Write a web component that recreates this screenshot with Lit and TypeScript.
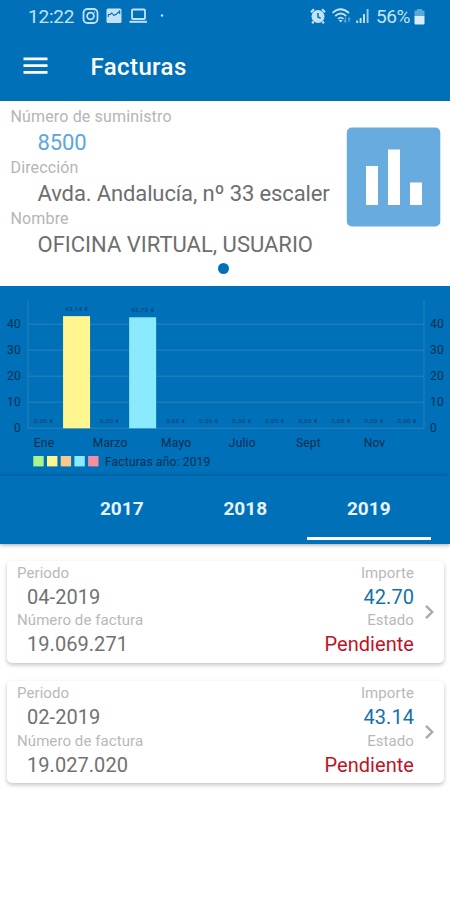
import { LitElement, html, svg, css } from "lit";
import { customElement, property } from "lit/decorators.js";

interface Invoice {
  period: string;
  number: string;
  amount: string;
  status: string;
}

const INVOICES: Invoice[] = [
  { period: "04-2019", number: "19.069.271", amount: "42.70", status: "Pendiente" },
  { period: "02-2019", number: "19.027.020", amount: "43.14", status: "Pendiente" },
];

@customElement("status-bar")
class StatusBar extends LitElement {
  static styles = css`
    :host { display: flex; align-items: center; height: 32px; padding: 0 25px 0 28px; color: #c3e2f7; font-size: 19px; }
    .time { width: 46px; letter-spacing: -0.2px; }
    .left { display: block; margin-left: 8px; }
    .right { display: block; margin-left: auto; }
    .pct { margin: 0 2px 0 4.5px; width: 36px; letter-spacing: -0.4px; }
    .battery { display: block; }
  `;
  render() {
    return html`
      <span class="time">12:22</span>
      <svg class="left" width="84" height="18" viewBox="0 0 84 18" fill="none" stroke="#c3e2f7" stroke-width="1.8">
        <rect x="1.5" y="2" width="14" height="14" rx="4" />
        <circle cx="8.5" cy="9" r="3.4" />
        <circle cx="12.4" cy="5.2" r="0.7" fill="#c3e2f7" stroke="none" />
        <rect x="24.5" y="1.5" width="15" height="14.5" rx="1.5" fill="#c3e2f7" stroke="none" />
        <path d="M26.3 10v-2.5h2l1.5-1.5 2.2 2.5 2.5-1.5L37.7 4v3" stroke="#0070b9" stroke-width="1.1" />
        <rect x="50" y="2.5" width="13" height="9.5" rx="1" />
        <path d="M47.5 14.8h17.5" stroke-width="2" />
        <circle cx="80" cy="8.5" r="1.2" fill="#c3e2f7" stroke="none" />
      </svg>
      <svg class="right" width="62" height="18" viewBox="0 0 62 18" fill="none" stroke="#c3e2f7">
        <circle cx="8" cy="9.5" r="6.5" fill="#c3e2f7" stroke="none" />
        <path d="M1 5.2 4 2.3M15 5.2 12 2.3M3.5 14.5 2.2 16.3M12.5 14.5l1.3 1.8" stroke-width="2.2" />
        <path d="M8 6v4l2.6 1.2" stroke="#0070b9" stroke-width="1.5" />
        <path d="M22.5 6q8-7.5 16.5 0M25.2 9q5.5-5 11 0M28 11.8q2.7-2.5 5.5 0" stroke-width="1.7" />
        <path d="M28.7 13l2 2.5 2-2.5z" fill="#c3e2f7" stroke="none" />
        <path d="M35.5 10.5v4.5l-1.5-1.5M39 15v-4l1.3 1.3" stroke="#5ca8da" stroke-width="1.3" />
        <path d="M47.2 16v-2.5M50.6 16v-5M54 16V7" stroke-width="1.9" />
        <path d="M57.6 16V2" stroke-width="1.9" opacity="0.8" />
      </svg>
      <span class="pct">56%</span>
      <svg class="battery" width="11" height="17" viewBox="0 0 11 17">
        <path d="M3 1h5v1.5h2.5V8H.5V2.5H3z" fill="#5ca6d8" />
        <path d="M.5 8h10v7.5q0 1-1 1h-8q-1 0-1-1z" fill="#d8edfb" />
      </svg>
    `;
  }
}

@customElement("invoice-chart")
class InvoiceChart extends LitElement {
  static styles = css`
    :host { display: block; height: 189.5px; background: #0070b9; }
    .plot { display: block; }
    .axis { font-size: 12px; fill: #062f50; letter-spacing: 0.2px; }
    .value { font-size: 6px; fill: #0a3a61; letter-spacing: 0.1px; }
    .grid { stroke: #1b7db9; stroke-width: 1.4; fill: none; }
  `;
  render() {
    const values = [0, 43.14, 0, 42.7, 0, 0, 0, 0, 0, 0, 0, 0];
    const months = ["Ene", "Marzo", "Mayo", "Julio", "Sept", "Nov"];
    const legend = ["#a9f58c", "#fff68f", "#f9c88b", "#8ceaff", "#f88ca0"];
    const base = 142.3;
    const unit = 2.6;
    const step = 33.05;
    return html`
      <svg class="plot" width="450" height="189" viewBox="0 0 450 189">
        <path class="grid" d="M28 14V143M424 14V143" />
        ${[0, 10, 20, 30, 40].map((v) => {
          const y = base - v * unit;
          return svg`
            <path class="grid" d=${`M28 ${y}H424`} />
            <text class="axis" x="21" y=${y + 3.7} text-anchor="end">${v}</text>
            <text class="axis" x="430" y=${y + 3.7}>${v}</text>`;
        })}
        ${values.map((v, i) => {
          const cx = 43.5 + i * step;
          const h = v * unit;
          return svg`
            ${v ? svg`<rect x=${cx - 13.5} y=${base - h} width="27" height=${h} fill=${i === 1 ? "#fff68f" : "#8ceaff"} />` : null}
            <text class="value" x=${cx} y=${base - h - 5.5} text-anchor="middle"
              textLength=${v ? 23 : 19}>${v.toFixed(2).replace(".", ",")} €</text>`;
        })}
        ${months.map((m, i) => svg`<text class="axis" x=${44 + i * 66.1} y="160.5" text-anchor="middle">${m}</text>`)}
        ${legend.map((c, i) => svg`<rect x=${33.3 + i * 13.7} y="170" width="10.4" height="10.4" fill=${c} />`)}
        <text class="axis" x="105" y="179.5" textLength="105.5">Facturas año: 2019</text>
      </svg>
    `;
  }
}

@customElement("invoice-card")
class InvoiceCard extends LitElement {
  @property({ attribute: false }) invoice!: Invoice;
  static styles = css`
    :host {
      display: flex; height: 102px; box-sizing: border-box; padding: 3px 9px 0 10px;
      background: #fff; border-radius: 5px; box-shadow: 0 2px 4px rgba(0, 0, 0, 0.24);
    }
    .left { flex: 1; }
    .right { text-align: right; margin-right: 1.5px; }
    .label { font-size: 15px; line-height: 19px; color: #b8b8b8; letter-spacing: 0.08px; }
    .value { font-size: 20px; line-height: 28.5px; color: #717171; letter-spacing: 0.05px; }
    .left .value { padding-left: 10px; }
    .right .amount { color: #1371ad; }
    .right .status { color: #c01226; }
    .chevron { display: block; margin: 40px 0 0 9.5px; }
  `;
  render() {
    const v = this.invoice;
    return html`
      <div class="left">
        <div class="label">Periodo</div>
        <div class="value">${v.period}</div>
        <div class="label">Número de factura</div>
        <div class="value">${v.number}</div>
      </div>
      <div class="right">
        <div class="label">Importe</div>
        <div class="value amount">${v.amount}</div>
        <div class="label">Estado</div>
        <div class="value status">${v.status}</div>
      </div>
      <svg class="chevron" width="10" height="16" viewBox="0 0 10 16" fill="none" stroke="#a9a9a9" stroke-width="2.4">
        <path d="M1 1.8 7.2 8 1 14.2" />
      </svg>
    `;
  }
}

@customElement("app-root")
class AppRoot extends LitElement {
  static styles = css`
    :host {
      display: block; width: 450px; height: 900px; overflow: hidden; background: #fff;
      font-family: Roboto, "Noto Sans", sans-serif;
    }
    .top { height: 100.5px; background: #0070b9; }
    .bar { display: flex; align-items: center; height: 67px; padding-left: 23px; }
    .title { margin: 2px 0 0 42.5px; color: #fff; font-size: 24px; font-weight: 500; letter-spacing: 0.4px; }
    .supply { display: flex; justify-content: space-between; height: 156px; padding: 6px 9px 0 10.5px; }
    .label { font-size: 16px; line-height: 20px; color: #b5b5b5; letter-spacing: 0.15px; white-space: nowrap; }
    .value { padding-left: 27px; font-size: 22px; line-height: 31px; color: #6e6e6e; letter-spacing: -0.12px; white-space: nowrap; }
    .value.number { color: #5ba6dc; }
    .value.name { letter-spacing: 0; }
    .stats { display: block; margin-top: 20px; }
    .pager { display: flex; justify-content: center; height: 23px; }
    .dot { width: 11px; height: 11px; margin-right: 4px; border-radius: 50%; background: #0070b9; }
    .tabs {
      display: flex; height: 68.5px; padding-left: 60px; background: #0070b9;
      box-shadow: 0 1px 4px rgba(0, 0, 0, 0.35); border-top: 1px solid #0064a6; box-sizing: border-box;
    }
    .tab {
      box-sizing: border-box; width: 123.5px; height: 64px; border-bottom: 3px solid transparent;
      color: #e6f3fc; font-size: 19px; font-weight: 700; line-height: 65px; text-align: center;
    }
    .tab.active { border-color: #fff; }
    .list { display: flex; flex-direction: column; gap: 18.5px; padding: 17.4px 6px 0 7px; }
  `;
  render() {
    return html`
      <div class="top">
        <status-bar></status-bar>
        <div class="bar">
          <svg width="25" height="18" viewBox="0 0 25 18" stroke="#fff" stroke-width="2.8">
            <path d="M0.5 1.8h24M0.5 8.6h24M0.5 15.4h24" />
          </svg>
          <span class="title">Facturas</span>
        </div>
      </div>
      <div class="supply">
        <div>
          <div class="label">Número de suministro</div>
          <div class="value number">8500</div>
          <div class="label">Dirección</div>
          <div class="value">Avda. Andalucía, nº 33 escaler</div>
          <div class="label">Nombre</div>
          <div class="value name">OFICINA VIRTUAL, USUARIO</div>
        </div>
        <svg class="stats" width="95" height="100" viewBox="0 0 95 100">
          <rect x="0.8" y="0.5" width="93.5" height="99" rx="5" fill="#67abdf" />
          <path d="M20 39h12v39H20zM42 22.5h12V78H42zM64 55.5h12V78H64z" fill="#fff" />
        </svg>
      </div>
      <div class="pager"><div class="dot"></div></div>
      <invoice-chart></invoice-chart>
      <div class="tabs">
        <div class="tab">2017</div>
        <div class="tab">2018</div>
        <div class="tab active">2019</div>
      </div>
      <div class="list">
        ${INVOICES.map((i) => html`<invoice-card .invoice=${i}></invoice-card>`)}
      </div>
    `;
  }
}
